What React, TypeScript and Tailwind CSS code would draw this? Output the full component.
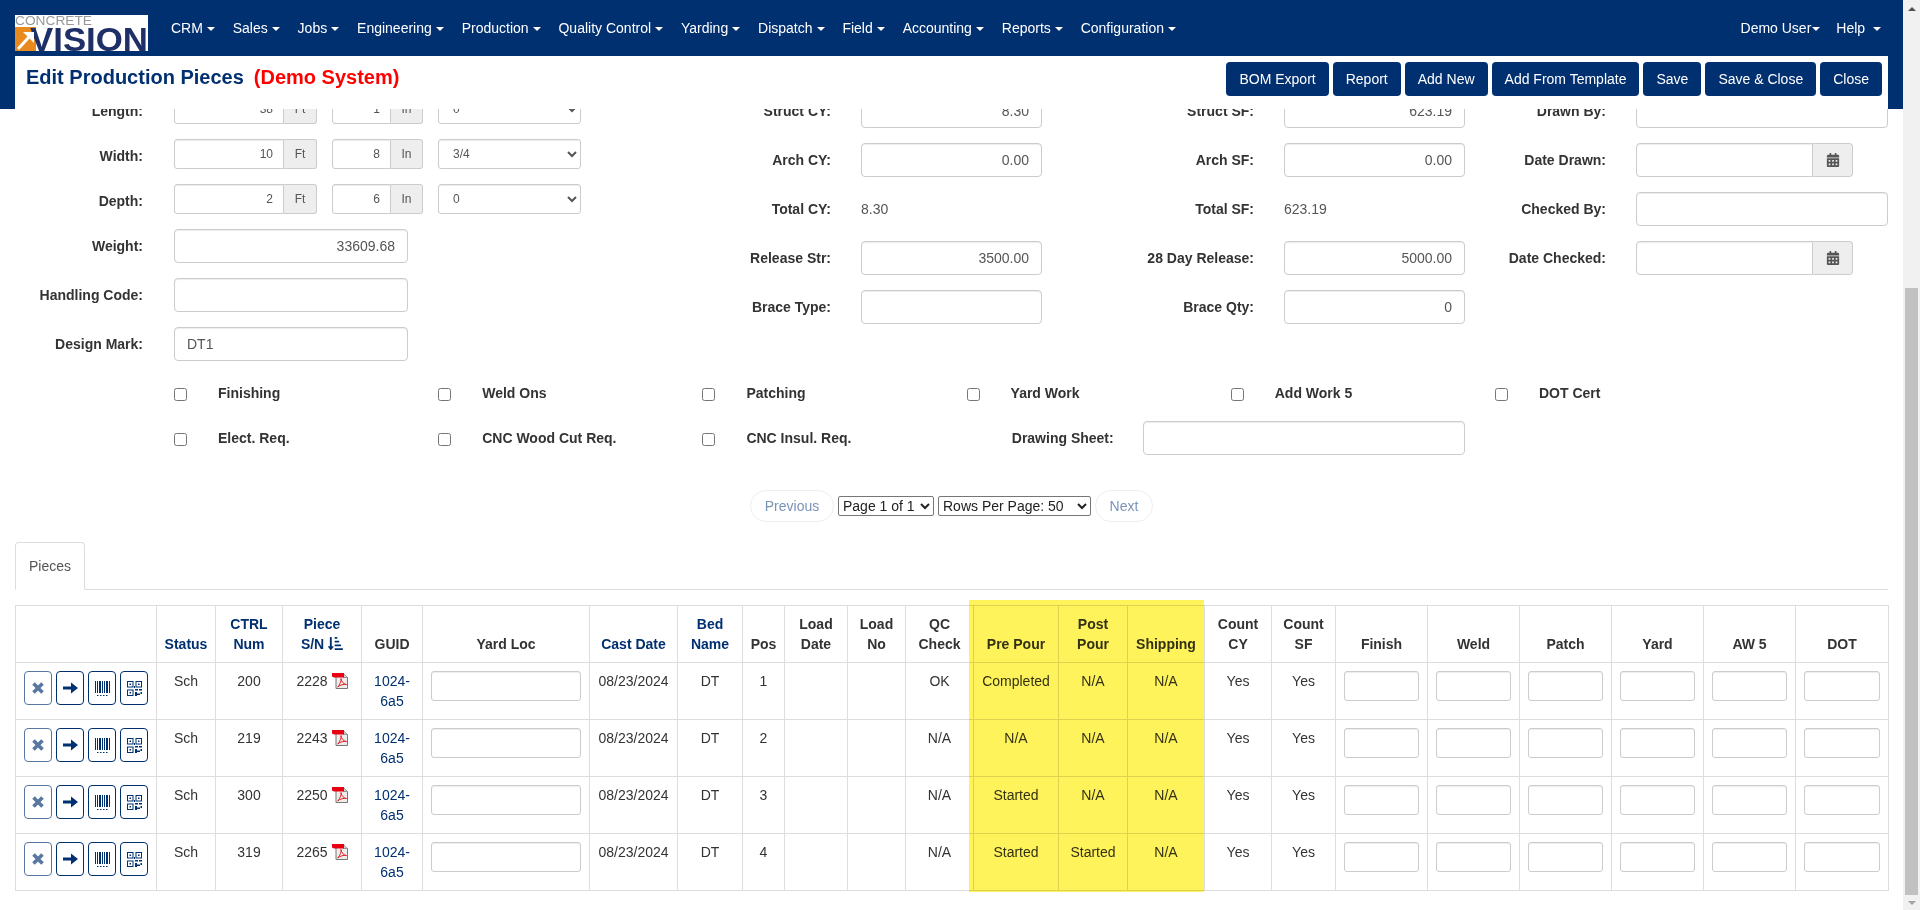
import { FaCalendarAlt, FaSortAmountDownAlt } from "react-icons/fa"

const menus = ["CRM", "Sales", "Jobs", "Engineering", "Production", "Quality Control", "Yarding", "Dispatch", "Field", "Accounting", "Reports", "Configuration"]
const actions = ["BOM Export", "Report", "Add New", "Add From Template", "Save", "Save & Close", "Close"]

const rows = [
  { ctrl: "200", sn: "2228", pos: "1", qc: "OK", pre: "Completed", post: "N/A" },
  { ctrl: "219", sn: "2243", pos: "2", qc: "N/A", pre: "N/A", post: "N/A" },
  { ctrl: "300", sn: "2250", pos: "3", qc: "N/A", pre: "Started", post: "N/A" },
  { ctrl: "319", sn: "2265", pos: "4", qc: "N/A", pre: "Started", post: "Started" },
]

const inputBase = "h-[34px] px-3 border border-[#ccc] rounded bg-white text-[14px] text-[#555] shadow-[inset_0_1px_1px_rgba(0,0,0,0.075)] outline-none"
const inputCls = inputBase + " text-right"
const thCls = "border border-[#ddd] p-2 align-bottom text-center font-bold leading-5"
const tdCls = "border border-[#ddd] p-2 align-top text-center leading-5"
const tblInput = "block w-full h-[30px] border border-[#ccc] rounded-[3px] bg-white shadow-[inset_0_1px_1px_rgba(0,0,0,0.075)] outline-none"
const iconBtn = "flex items-center justify-center w-7 h-[34px] border border-[#003070] rounded bg-white text-[#003070]"

const Caret = () => <span className="inline-block w-0 h-0 ml-1 align-middle border-x-4 border-t-4 border-x-transparent border-t-white"></span>

const Logo = () => (
  <svg width="133" height="36" viewBox="0 0 133 36" className="mt-[15px] shrink-0 overflow-visible">
    <rect width="133" height="36" fill="#fff" />
    <rect x="0" y="12" width="21" height="24" fill="#e98a1e" />
    <text x="0" y="10" fontSize="13" fill="#999" fontFamily="Liberation Sans" textLength="77" lengthAdjust="spacingAndGlyphs">CONCRETE</text>
    <text x="15" y="36" fontSize="34" fontWeight="bold" fill="#1f2f68" fontFamily="Liberation Sans" textLength="118" lengthAdjust="spacingAndGlyphs">VISION</text>
    <path d="M3 34 L14 22" stroke="#fff" strokeWidth="3" />
    <path d="M8 17 H19 V28 Z" fill="#fff" />
  </svg>
)

const PdfIcon = () => (
  <svg width="16" height="16" viewBox="0 0 16 16" className="inline-block ml-[4px] align-[-3px]">
    <path d="M4 0.5 H11.5 L15.5 4.5 V15.5 H4 Z" fill="#efedea" stroke="#777" />
    <path d="M11.5 0.5 V4.5 H15.5" fill="#ccc" stroke="#777" strokeWidth="0.7" />
    <path d="M0 0 H12 V4.5 H2 L0 3.5 Z" fill="#e60012" />
    <path d="M6 14 C8 11 9.5 8 9 5.5 C9.5 9 11.5 11 14.5 11.5 C11.5 11 8 12 5.5 14" fill="none" stroke="#e4202c" strokeWidth="1" />
  </svg>
)

const XIcon = () => (
  <svg width="12" height="12" viewBox="0 0 12 12"><path d="M1.5 1.5 L10.5 10.5 M10.5 1.5 L1.5 10.5" stroke="currentColor" strokeWidth="3.6" /></svg>
)

const ArrowIcon = () => (
  <svg width="15" height="12" viewBox="0 0 15 12"><path d="M0 4.5 H8 V0.5 L15 6 L8 11.5 V7.5 H0 Z" fill="currentColor" /></svg>
)

// bars plus the little row of digits under them
const BarcodeIcon = () => (
  <svg width="15" height="15" viewBox="0 0 15 15" fill="currentColor">
    <path d="M0 0h1v12H0z M2 0h1v12H2z M4 0h2v12H4z M7 0h1v12H7z M9 0h1v12H9z M11 0h2v12h-2z M14 0h1v12h-1z" />
    <path d="M2 14h1.5v1H2z M5 14h1.5v1H5z M8 14h1.5v1H8z M11 14h1.5v1H11z" />
  </svg>
)

const QrIcon = () => (
  <svg width="15" height="15" viewBox="0 0 15 15" fill="none" stroke="currentColor">
    <rect x="0.5" y="0.5" width="5.5" height="5.5" />
    <rect x="9" y="0.5" width="5.5" height="5.5" />
    <rect x="0.5" y="9" width="5.5" height="5.5" />
    <path d="M2.5 2.5h1.5v1.5H2.5z M11 2.5h1.5v1.5H11z M2.5 11h1.5v1.5H2.5z" fill="currentColor" stroke="none" />
    <path d="M8 8h3v1.5H8z M12 8h3v1.5h-3z M8 11h2v4H8z M10 12.5h3v1.5h-3z M13.5 11H15v2h-1.5z M7 5h1v2H7z" fill="currentColor" stroke="none" />
  </svg>
)

const Label = ({ className, children }: { className: string; children: string }) => (
  <label className={"shrink-0 text-right font-bold " + className}>{children}</label>
)

// length / width / depth rows in the left column
const SizeRow = ({ label, ft, inch, frac }: { label: string; ft: string; inch: string; frac: string }) => (
  <div className="flex items-center h-[30px]">
    <Label className="w-[128px] mr-[31px] pt-1">{label}</Label>
    <div className="flex w-[143px]">
      <input readOnly defaultValue={ft} className="w-[110px] h-[30px] px-2.5 border border-[#ccc] rounded-l-[3px] text-[12px] text-[#555] text-right outline-none shadow-[inset_0_1px_1px_rgba(0,0,0,0.075)]" />
      <span className="flex-1 flex items-center justify-center border border-l-0 border-[#ccc] rounded-r-[3px] bg-[#eee] text-[12px] text-[#555]">Ft</span>
    </div>
    <div className="flex w-[91px] ml-[15px]">
      <input readOnly defaultValue={inch} className="w-[59px] h-[30px] px-2.5 border border-[#ccc] rounded-l-[3px] text-[12px] text-[#555] text-right outline-none shadow-[inset_0_1px_1px_rgba(0,0,0,0.075)]" />
      <span className="flex-1 flex items-center justify-center border border-l-0 border-[#ccc] rounded-r-[3px] bg-[#eee] text-[12px] text-[#555]">In</span>
    </div>
    <select defaultValue={frac} className="w-[143px] h-[30px] ml-[15px] px-2.5 border border-[#ccc] rounded-[3px] bg-white text-[12px] text-[#555] outline-none shadow-[inset_0_1px_1px_rgba(0,0,0,0.075)]">
      <option>{frac}</option>
    </select>
  </div>
)

const DateField = () => (
  <div className="flex w-[217px]">
    <input readOnly className="w-[177px] h-[34px] px-3 border border-[#ccc] rounded-l bg-white outline-none shadow-[inset_0_1px_1px_rgba(0,0,0,0.075)]" />
    <span className="flex-1 flex items-center justify-center border border-l-0 border-[#ccc] rounded-r bg-[#eee] text-[#555]">
      <FaCalendarAlt size={14} />
    </span>
  </div>
)

const Check = ({ label, className }: { label: string; className: string }) => (
  <div className={"flex items-center shrink-0 " + className}>
    <span className="w-[13px] h-[13px] mt-0.5 shrink-0 border border-[#767676] rounded-[2.5px] bg-white"></span>
    <span className="ml-[31px] font-bold whitespace-nowrap">{label}</span>
  </div>
)

export default function App() {
  return (
    <div className="flex h-[910px] overflow-hidden bg-white text-[14px] text-[#333] font-['Liberation_Sans',Arial,sans-serif]">
      <div className="flex-1 min-w-0 overflow-hidden">
        <header className="relative z-10 h-[109px] bg-[#003070]">
          <nav className="flex h-14 pl-[15px] pr-[15px] text-white">
            <Logo />
            <ul className="flex items-center ml-[14px]">
              {menus.map((m) => (
                <li key={m} className="px-[8.95px] whitespace-nowrap">{m}<Caret /></li>
              ))}
            </ul>
            <ul className="flex items-center ml-auto">
              <li className="mr-[16px] whitespace-nowrap">Demo User<span className="inline-block w-0 h-0 ml-[1px] align-middle border-x-4 border-t-4 border-x-transparent border-t-white"></span></li>
              <li className="pr-[7px] whitespace-nowrap">Help <Caret /></li>
            </ul>
          </nav>
          <div className="flex justify-between h-[53px] mx-[15px] pl-[11px] pr-[6px] pt-[6px] bg-white">
            <h1 className="flex h-[30px] items-center gap-2.5 text-[20px] font-bold text-[#003070] whitespace-nowrap">
              Edit Production Pieces <span className="text-[#ff0000]">(Demo System)</span>
            </h1>
            <div className="flex gap-1">
              {actions.map((a) => (
                <button key={a} className="h-[34px] px-[13px] rounded bg-[#003070] text-white whitespace-nowrap">{a}</button>
              ))}
            </div>
          </div>
        </header>

        <main className="-mt-[15px] px-[15px]">
          <div className="flex">
            {/* left column */}
            <div className="w-[585px] flex flex-col gap-[15px]">
              <SizeRow label="Length:" ft="38" inch="1" frac="0" />
              <SizeRow label="Width:" ft="10" inch="8" frac="3/4" />
              <SizeRow label="Depth:" ft="2" inch="6" frac="0" />
              <div className="flex items-center">
                <Label className="w-[128px] mr-[31px]">Weight:</Label>
                <input readOnly defaultValue="33609.68" className={inputCls + " w-[234px]"} />
              </div>
              <div className="flex items-center">
                <Label className="w-[128px] mr-[31px]">Handling Code:</Label>
                <input readOnly className={inputCls + " w-[234px]"} />
              </div>
              <div className="flex items-center">
                <Label className="w-[128px] mr-[31px]">Design Mark:</Label>
                <input readOnly defaultValue="DT1" className={inputBase + " w-[234px] text-left"} />
              </div>
            </div>

            {/* cubic yards */}
            <div className="w-[441px] flex flex-col gap-[15px]">
              <div className="flex items-center"><Label className="w-[231px] mr-[30px]">Struct CY:</Label><input readOnly defaultValue="8.30" className={inputCls + " w-[181px]"} /></div>
              <div className="flex items-center"><Label className="w-[231px] mr-[30px]">Arch CY:</Label><input readOnly defaultValue="0.00" className={inputCls + " w-[181px]"} /></div>
              <div className="flex items-center h-[34px]"><Label className="w-[231px] mr-[30px]">Total CY:</Label><span className="text-[#555]">8.30</span></div>
              <div className="flex items-center"><Label className="w-[231px] mr-[30px]">Release Str:</Label><input readOnly defaultValue="3500.00" className={inputCls + " w-[181px]"} /></div>
              <div className="flex items-center"><Label className="w-[231px] mr-[30px]">Brace Type:</Label><input readOnly className={inputCls + " w-[181px]"} /></div>
            </div>

            {/* square feet */}
            <div className="w-[423px] flex flex-col gap-[15px]">
              <div className="flex items-center"><Label className="w-[213px] mr-[30px]">Struct SF:</Label><input readOnly defaultValue="623.19" className={inputCls + " w-[181px]"} /></div>
              <div className="flex items-center"><Label className="w-[213px] mr-[30px]">Arch SF:</Label><input readOnly defaultValue="0.00" className={inputCls + " w-[181px]"} /></div>
              <div className="flex items-center h-[34px]"><Label className="w-[213px] mr-[30px]">Total SF:</Label><span className="text-[#555]">623.19</span></div>
              <div className="flex items-center"><Label className="w-[213px] mr-[30px]">28 Day Release:</Label><input readOnly defaultValue="5000.00" className={inputCls + " w-[181px]"} /></div>
              <div className="flex items-center"><Label className="w-[213px] mr-[30px]">Brace Qty:</Label><input readOnly defaultValue="0" className={inputCls + " w-[181px]"} /></div>
            </div>

            {/* drawn / checked */}
            <div className="flex-1 flex flex-col gap-[15px]">
              <div className="flex items-center"><Label className="w-[142px] mr-[30px]">Drawn By:</Label><input readOnly className={inputCls + " w-[252px]"} /></div>
              <div className="flex items-center"><Label className="w-[142px] mr-[30px]">Date Drawn:</Label><DateField /></div>
              <div className="flex items-center"><Label className="w-[142px] mr-[30px]">Checked By:</Label><input readOnly className={inputCls + " w-[252px]"} /></div>
              <div className="flex items-center"><Label className="w-[142px] mr-[30px]">Date Checked:</Label><DateField /></div>
            </div>
          </div>

          <div className="flex h-5 mt-[22px] pl-[159px]">
            <Check label="Finishing" className="w-[264.2px]" />
            <Check label="Weld Ons" className="w-[264.2px]" />
            <Check label="Patching" className="w-[264.2px]" />
            <Check label="Yard Work" className="w-[264.2px]" />
            <Check label="Add Work 5" className="w-[264.2px]" />
            <Check label="DOT Cert" className="w-[264.2px]" />
          </div>
          <div className="flex items-center h-[34px] mt-[18px] pl-[159px]">
            <Check label="Elect. Req." className="w-[264.2px]" />
            <Check label="CNC Wood Cut Req." className="w-[264.2px]" />
            <Check label="CNC Insul. Req." className="w-[309.4px]" />
            <span className="font-bold whitespace-nowrap w-[131px]">Drawing Sheet:</span>
            <input readOnly className={inputCls + " w-[322px]"} />
          </div>

          <div className="flex items-center justify-center h-8 mt-[35px] gap-1">
            <button className="h-8 w-[84px] border border-[#eee] rounded-full bg-white text-[#7a93b8]">Previous</button>
            <select className="w-[96px] h-5 border border-[#767676] rounded-[2px] bg-white text-[14px] text-[#222]"><option>Page 1 of 1</option></select>
            <select className="w-[153px] h-5 border border-[#767676] rounded-[2px] bg-white text-[14px] text-[#222]"><option>Rows Per Page: 50</option></select>
            <button className="h-8 w-[58px] border border-[#eee] rounded-full bg-white text-[#7a93b8]">Next</button>
          </div>

          <div className="flex h-[48px] mt-5 border-b border-[#ddd]">
            <div className="h-[48px] w-[70px] flex items-center justify-center border border-[#ddd] border-b-white rounded-t bg-white text-[#555]">Pieces</div>
          </div>

          <div className="relative mt-[15px] w-[1873px]">
            <table className="w-[1873px] table-fixed border-collapse">
              <colgroup>
                <col className="w-[141px]" /><col className="w-[59px]" /><col className="w-[67px]" /><col className="w-[79px]" />
                <col className="w-[61px]" /><col className="w-[167px]" /><col className="w-[88px]" /><col className="w-[65px]" />
                <col className="w-[42px]" /><col className="w-[63px]" /><col className="w-[58px]" /><col className="w-[68px]" />
                <col className="w-[85px]" /><col className="w-[69px]" /><col className="w-[77px]" /><col className="w-[67px]" />
                <col className="w-[64px]" /><col className="w-[92px]" /><col className="w-[92px]" /><col className="w-[92px]" />
                <col className="w-[92px]" /><col className="w-[92px]" /><col className="w-[93px]" />
              </colgroup>
              <thead>
                <tr>
                  <th className={thCls}></th>
                  <th className={thCls + " px-0 text-[#003070]"}>Status</th>
                  <th className={thCls + " text-[#003070]"}>CTRL Num</th>
                  <th className={thCls + " px-0 text-[#003070]"}>Piece<br />S/N <FaSortAmountDownAlt size={15} className="inline-block align-[-2px]" /></th>
                  <th className={thCls}>GUID</th>
                  <th className={thCls}>Yard Loc</th>
                  <th className={thCls + " px-0 text-[#003070]"}>Cast Date</th>
                  <th className={thCls + " text-[#003070]"}>Bed Name</th>
                  <th className={thCls + " px-0"}>Pos</th>
                  <th className={thCls}>Load Date</th>
                  <th className={thCls}>Load No</th>
                  <th className={thCls}>QC Check</th>
                  <th className={thCls}>Pre Pour</th>
                  <th className={thCls}>Post Pour</th>
                  <th className={thCls + " px-0"}>Shipping</th>
                  <th className={thCls}>Count CY</th>
                  <th className={thCls}>Count SF</th>
                  <th className={thCls}>Finish</th>
                  <th className={thCls}>Weld</th>
                  <th className={thCls}>Patch</th>
                  <th className={thCls}>Yard</th>
                  <th className={thCls}>AW 5</th>
                  <th className={thCls}>DOT</th>
                </tr>
              </thead>
              <tbody>
                {rows.map((r) => (
                  <tr key={r.sn}>
                    <td className={tdCls}>
                      <div className="flex gap-1">
                        <button className={iconBtn + " opacity-65"}><XIcon /></button>
                        <button className={iconBtn}><ArrowIcon /></button>
                        <button className={iconBtn}><BarcodeIcon /></button>
                        <button className={iconBtn}><QrIcon /></button>
                      </div>
                    </td>
                    <td className={tdCls}>Sch</td>
                    <td className={tdCls}>{r.ctrl}</td>
                    <td className={tdCls + " px-0"}>{r.sn}<PdfIcon /></td>
                    <td className={tdCls + " text-[#003070]"}>1024-<br />6a5</td>
                    <td className={tdCls}><input readOnly className={tblInput} /></td>
                    <td className={tdCls + " px-0"}>08/23/2024</td>
                    <td className={tdCls}>DT</td>
                    <td className={tdCls}>{r.pos}</td>
                    <td className={tdCls}></td>
                    <td className={tdCls}></td>
                    <td className={tdCls}>{r.qc}</td>
                    <td className={tdCls + " px-0"}>{r.pre}</td>
                    <td className={tdCls + " px-0"}>{r.post}</td>
                    <td className={tdCls}>N/A</td>
                    <td className={tdCls}>Yes</td>
                    <td className={tdCls}>Yes</td>
                    <td className={tdCls}><input readOnly className={tblInput} /></td>
                    <td className={tdCls}><input readOnly className={tblInput} /></td>
                    <td className={tdCls}><input readOnly className={tblInput} /></td>
                    <td className={tdCls}><input readOnly className={tblInput} /></td>
                    <td className={tdCls}><input readOnly className={tblInput} /></td>
                    <td className={tdCls}><input readOnly className={tblInput} /></td>
                  </tr>
                ))}
              </tbody>
            </table>
            {/* highlighter over the three status columns */}
            <div className="absolute left-[954px] -top-[5px] w-[235px] h-[292px] bg-[#fff35c] mix-blend-multiply pointer-events-none"></div>
          </div>
        </main>
      </div>

      <aside className="w-[17px] shrink-0 flex flex-col bg-[#f1f1f1]">
        <div className="h-[17px] flex items-center justify-center">
          <span className="w-0 h-0 border-x-4 border-b-4 border-x-transparent border-b-[#505050]"></span>
        </div>
        <div className="flex-1 flex flex-col pt-[271px] items-center">
          <div className="w-[13px] h-[607px] bg-[#c1c1c1]"></div>
        </div>
        <div className="h-[15px] flex items-center justify-center">
          <span className="w-0 h-0 border-x-4 border-t-4 border-x-transparent border-t-[#a3a3a3]"></span>
        </div>
      </aside>
    </div>
  )
}
